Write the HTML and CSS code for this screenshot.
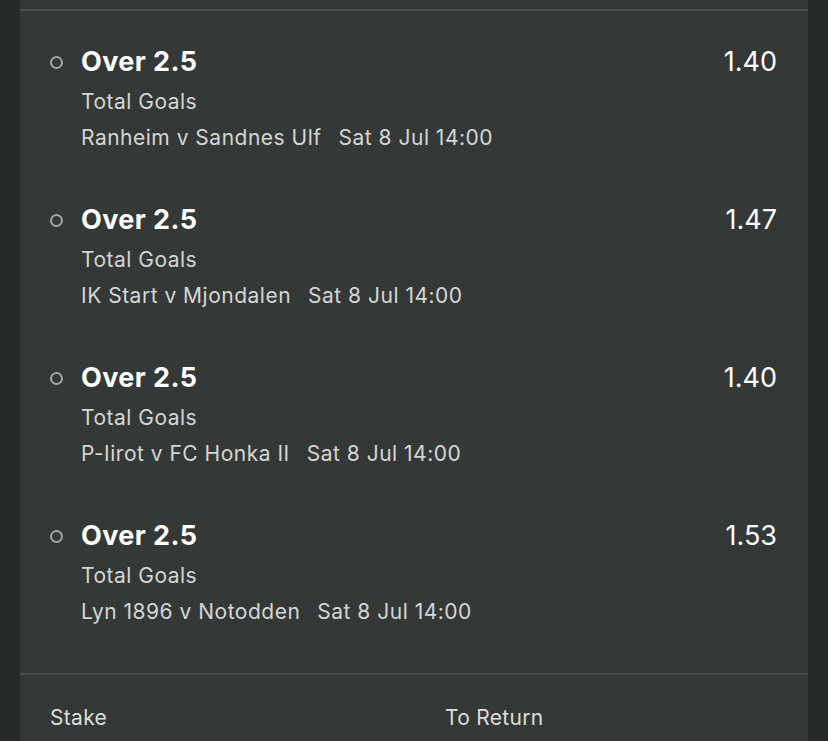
FILE: index.html
```html
<!DOCTYPE html>
<html>
<head>
<meta charset="utf-8">
<link rel="stylesheet" href="styles.css">
</head>
<body>
<div class="panel">
  <div class="top-line"></div>
  <div class="selections">
    <div class="sel">
      <span class="dot"></span>
      <div class="info">
        <div class="name">Over 2.5</div>
        <div class="market">Total Goals</div>
        <div class="event"><span>Ranheim v Sandnes Ulf</span><span class="time">Sat 8 Jul 14:00</span></div>
      </div>
      <div class="odds">1.40</div>
    </div>
    <div class="sel">
      <span class="dot"></span>
      <div class="info">
        <div class="name">Over 2.5</div>
        <div class="market">Total Goals</div>
        <div class="event"><span>IK Start v Mjondalen</span><span class="time">Sat 8 Jul 14:00</span></div>
      </div>
      <div class="odds">1.47</div>
    </div>
    <div class="sel">
      <span class="dot"></span>
      <div class="info">
        <div class="name">Over 2.5</div>
        <div class="market">Total Goals</div>
        <div class="event"><span>P-Iirot v FC Honka II</span><span class="time">Sat 8 Jul 14:00</span></div>
      </div>
      <div class="odds">1.40</div>
    </div>
    <div class="sel">
      <span class="dot"></span>
      <div class="info">
        <div class="name">Over 2.5</div>
        <div class="market">Total Goals</div>
        <div class="event"><span>Lyn 1896 v Notodden</span><span class="time">Sat 8 Jul 14:00</span></div>
      </div>
      <div class="odds">1.53</div>
    </div>
  </div>
  <div class="footer">
    <div class="stake">Stake</div>
    <div class="return">To Return</div>
  </div>
</div>
</body>
</html>
```
FILE: styles.css
```css
html, body {
  margin: 0;
  padding: 0;
  background: #272828;
  height: 741px;
  overflow: hidden;
}
body {
  font-family: Inter, Roboto, "Liberation Sans", sans-serif;
  color: #ffffff;
}
.panel {
  margin: 0 20px;
  background: #343837;
  height: 741px;
  display: flex;
  flex-direction: column;
}
.top-line {
  margin-top: 9px;
  height: 2px;
  background: #4a4f4e;
  flex: none;
}
.selections {
  padding-top: 34px;
  display: flex;
  flex-direction: column;
  flex: none;
}
.sel {
  display: flex;
  align-items: flex-start;
  height: 158px;
  flex: none;
}
.sel:last-child {
  height: 154px;
}
.dot {
  width: 9px;
  height: 9px;
  border: 2px solid #a3a6a5;
  border-radius: 50%;
  margin-left: 30px;
  margin-top: 11px;
  flex: none;
}
.info {
  margin-left: 18px;
  flex: 1;
}
.name {
  font-size: 27px;
  font-weight: 700;
  line-height: 34px;
  letter-spacing: 0.4px;
  color: #ffffff;
}
.market {
  font-size: 21px;
  line-height: 26px;
  letter-spacing: 0.5px;
  margin-top: 10px;
  color: #d4d6d5;
}
.event {
  font-size: 21px;
  line-height: 26px;
  letter-spacing: 0.5px;
  margin-top: 10px;
  color: #d4d6d5;
  display: flex;
  gap: 17px;
}
.odds {
  font-size: 27px;
  line-height: 34px;
  letter-spacing: 0;
  margin-right: 31px;
  color: #ffffff;
}
.footer {
  border-top: 2px solid #474c4b;
  display: flex;
  padding-top: 30px;
  font-size: 21px;
  line-height: 26px;
  letter-spacing: 0.3px;
  color: #dcdedd;
}
.stake {
  margin-left: 30px;
  width: 395px;
}
```
